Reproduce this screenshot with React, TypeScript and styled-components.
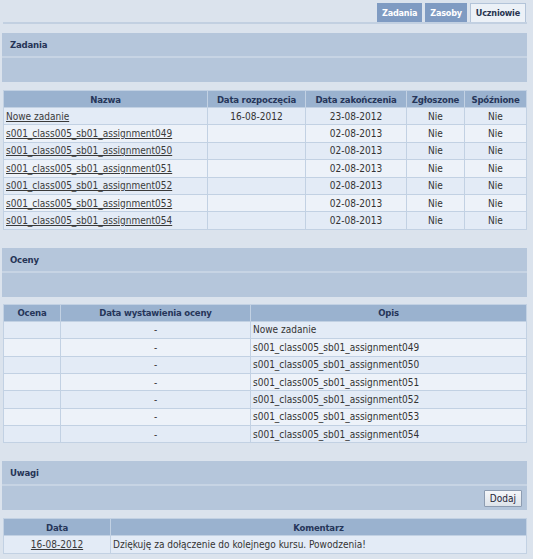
import React from 'react';
import styled, { createGlobalStyle } from 'styled-components';

const GlobalStyle = createGlobalStyle`
  html, body {
    margin: 0;
    padding: 0;
    background: #dbe3ed;
  }
  body {
    font-family: "DejaVu Sans Condensed", "DejaVu Sans", sans-serif;
    font-stretch: condensed;
    font-size: 10px;
    color: #333;
  }
`;

const Page = styled.div`
  padding: 3px 6px 6px 2px;
`;

const TabBar = styled.div`
  display: flex;
  justify-content: flex-end;
  gap: 3px;
  padding-right: 1px;
  margin-left: 1px;
  border-bottom: 2px solid #c2d0e1;
`;

const Tab = styled.div<{ active?: boolean }>`
  height: 18px;
  line-height: 18px;
  padding: 0 ${({ active }) => (active ? 5 : 4)}px;
  font-size: 9px;
  letter-spacing: -0.2px;
  font-weight: bold;
  color: ${({ active }) => (active ? '#27344f' : '#fff')};
  background: ${({ active }) => (active ? '#ecf1f7' : '#7f9bc2')};
  border: 1px solid ${({ active }) => (active ? '#b3c4d9' : '#7f9bc2')};
  border-bottom: none;
`;

const Section = styled.div<{ top: number }>`
  margin-top: ${({ top }) => top}px;
  background: #b5c6db;
`;

const SectionHead = styled.div`
  height: 23px;
  line-height: 23px;
  padding-left: 8px;
  font-size: 9.5px;
  letter-spacing: -0.2px;
  font-weight: bold;
  color: #263456;
  border-bottom: 2px solid #c7d4e4;
`;

const SectionBody = styled.div`
  height: 24px;
  display: flex;
  align-items: center;
  justify-content: flex-end;
  padding-right: 5px;
`;

const Button = styled.button`
  font-family: inherit;
  font-stretch: condensed;
  font-size: 10px;
  color: #1d2436;
  height: 17px;
  padding: 0 5px;
  background: linear-gradient(#f4f6f9, #dde3ea);
  border: 1px solid #8d9cb1;
  border-radius: 1px;
`;

const Table = styled.table<{ top: number }>`
  margin-top: ${({ top }) => top}px;
  margin-left: 1px;
  width: calc(100% - 1px);
  table-layout: fixed;
  border-collapse: collapse;
  border: 1px solid #c9d6e6;
`;

const Th = styled.th<{ w?: number }>`
  box-sizing: border-box;
  width: ${({ w }) => (w ? `${w}px` : 'auto')};
  height: 17px;
  padding: 0 3px;
  background: #9ab2cf;
  color: #26365a;
  font-size: 9.5px;
  letter-spacing: -0.2px;
  font-weight: bold;
  text-align: center;
  border: 1px solid #c2d1e3;
  white-space: nowrap;
`;

const Tr = styled.tr<{ alt?: boolean }>`
  background: ${({ alt }) => (alt ? '#edf2f9' : '#e3ebf6')};
`;

const Td = styled.td<{ align?: string }>`
  box-sizing: border-box;
  height: 17.4px;
  padding: 0 2px;
  text-align: ${({ align }) => align || 'center'};
  border: 1px solid #c2d1e3;
  white-space: nowrap;
`;

const Link = styled.a`
  color: #3a3a3a;
  text-decoration: underline;
  cursor: pointer;
`;

const names = [
  'Nowe zadanie',
  's001_class005_sb01_assignment049',
  's001_class005_sb01_assignment050',
  's001_class005_sb01_assignment051',
  's001_class005_sb01_assignment052',
  's001_class005_sb01_assignment053',
  's001_class005_sb01_assignment054',
];

const Panel = ({ title, top, children }: { title: string; top: number; children?: React.ReactNode }) => (
  <Section top={top}>
    <SectionHead>{title}</SectionHead>
    <SectionBody>{children}</SectionBody>
  </Section>
);

export default function App() {
  return (
    <Page>
      <GlobalStyle />
      <TabBar>
        <Tab>Zadania</Tab>
        <Tab>Zasoby</Tab>
        <Tab active>Uczniowie</Tab>
      </TabBar>

      <Panel title="Zadania" top={9} />
      <Table top={8}>
        <thead>
          <tr>
            <Th>Nazwa</Th>
            <Th w={98}>Data rozpoczęcia</Th>
            <Th w={101}>Data zakończenia</Th>
            <Th w={58}>Zgłoszone</Th>
            <Th w={62}>Spóźnione</Th>
          </tr>
        </thead>
        <tbody>
          {names.map((n, i) => (
            <Tr key={n} alt={i % 2 === 1}>
              <Td align="left"><Link>{n}</Link></Td>
              <Td>{i === 0 ? '16-08-2012' : ''}</Td>
              <Td>{i === 0 ? '23-08-2012' : '02-08-2013'}</Td>
              <Td>Nie</Td>
              <Td>Nie</Td>
            </Tr>
          ))}
        </tbody>
      </Table>

      <Panel title="Oceny" top={18} />
      <Table top={7}>
        <thead>
          <tr>
            <Th w={57}>Ocena</Th>
            <Th w={190}>Data wystawienia oceny</Th>
            <Th>Opis</Th>
          </tr>
        </thead>
        <tbody>
          {names.map((n, i) => (
            <Tr key={n} alt={i % 2 === 1}>
              <Td></Td>
              <Td>-</Td>
              <Td align="left">{n}</Td>
            </Tr>
          ))}
        </tbody>
      </Table>

      <Panel title="Uwagi" top={18}>
        <Button>Dodaj</Button>
      </Panel>
      <Table top={8}>
        <thead>
          <tr>
            <Th w={107}>Data</Th>
            <Th>Komentarz</Th>
          </tr>
        </thead>
        <tbody>
          <Tr>
            <Td><Link>16-08-2012</Link></Td>
            <Td align="left">Dziękuję za dołączenie do kolejnego kursu. Powodzenia!</Td>
          </Tr>
        </tbody>
      </Table>
    </Page>
  );
}
